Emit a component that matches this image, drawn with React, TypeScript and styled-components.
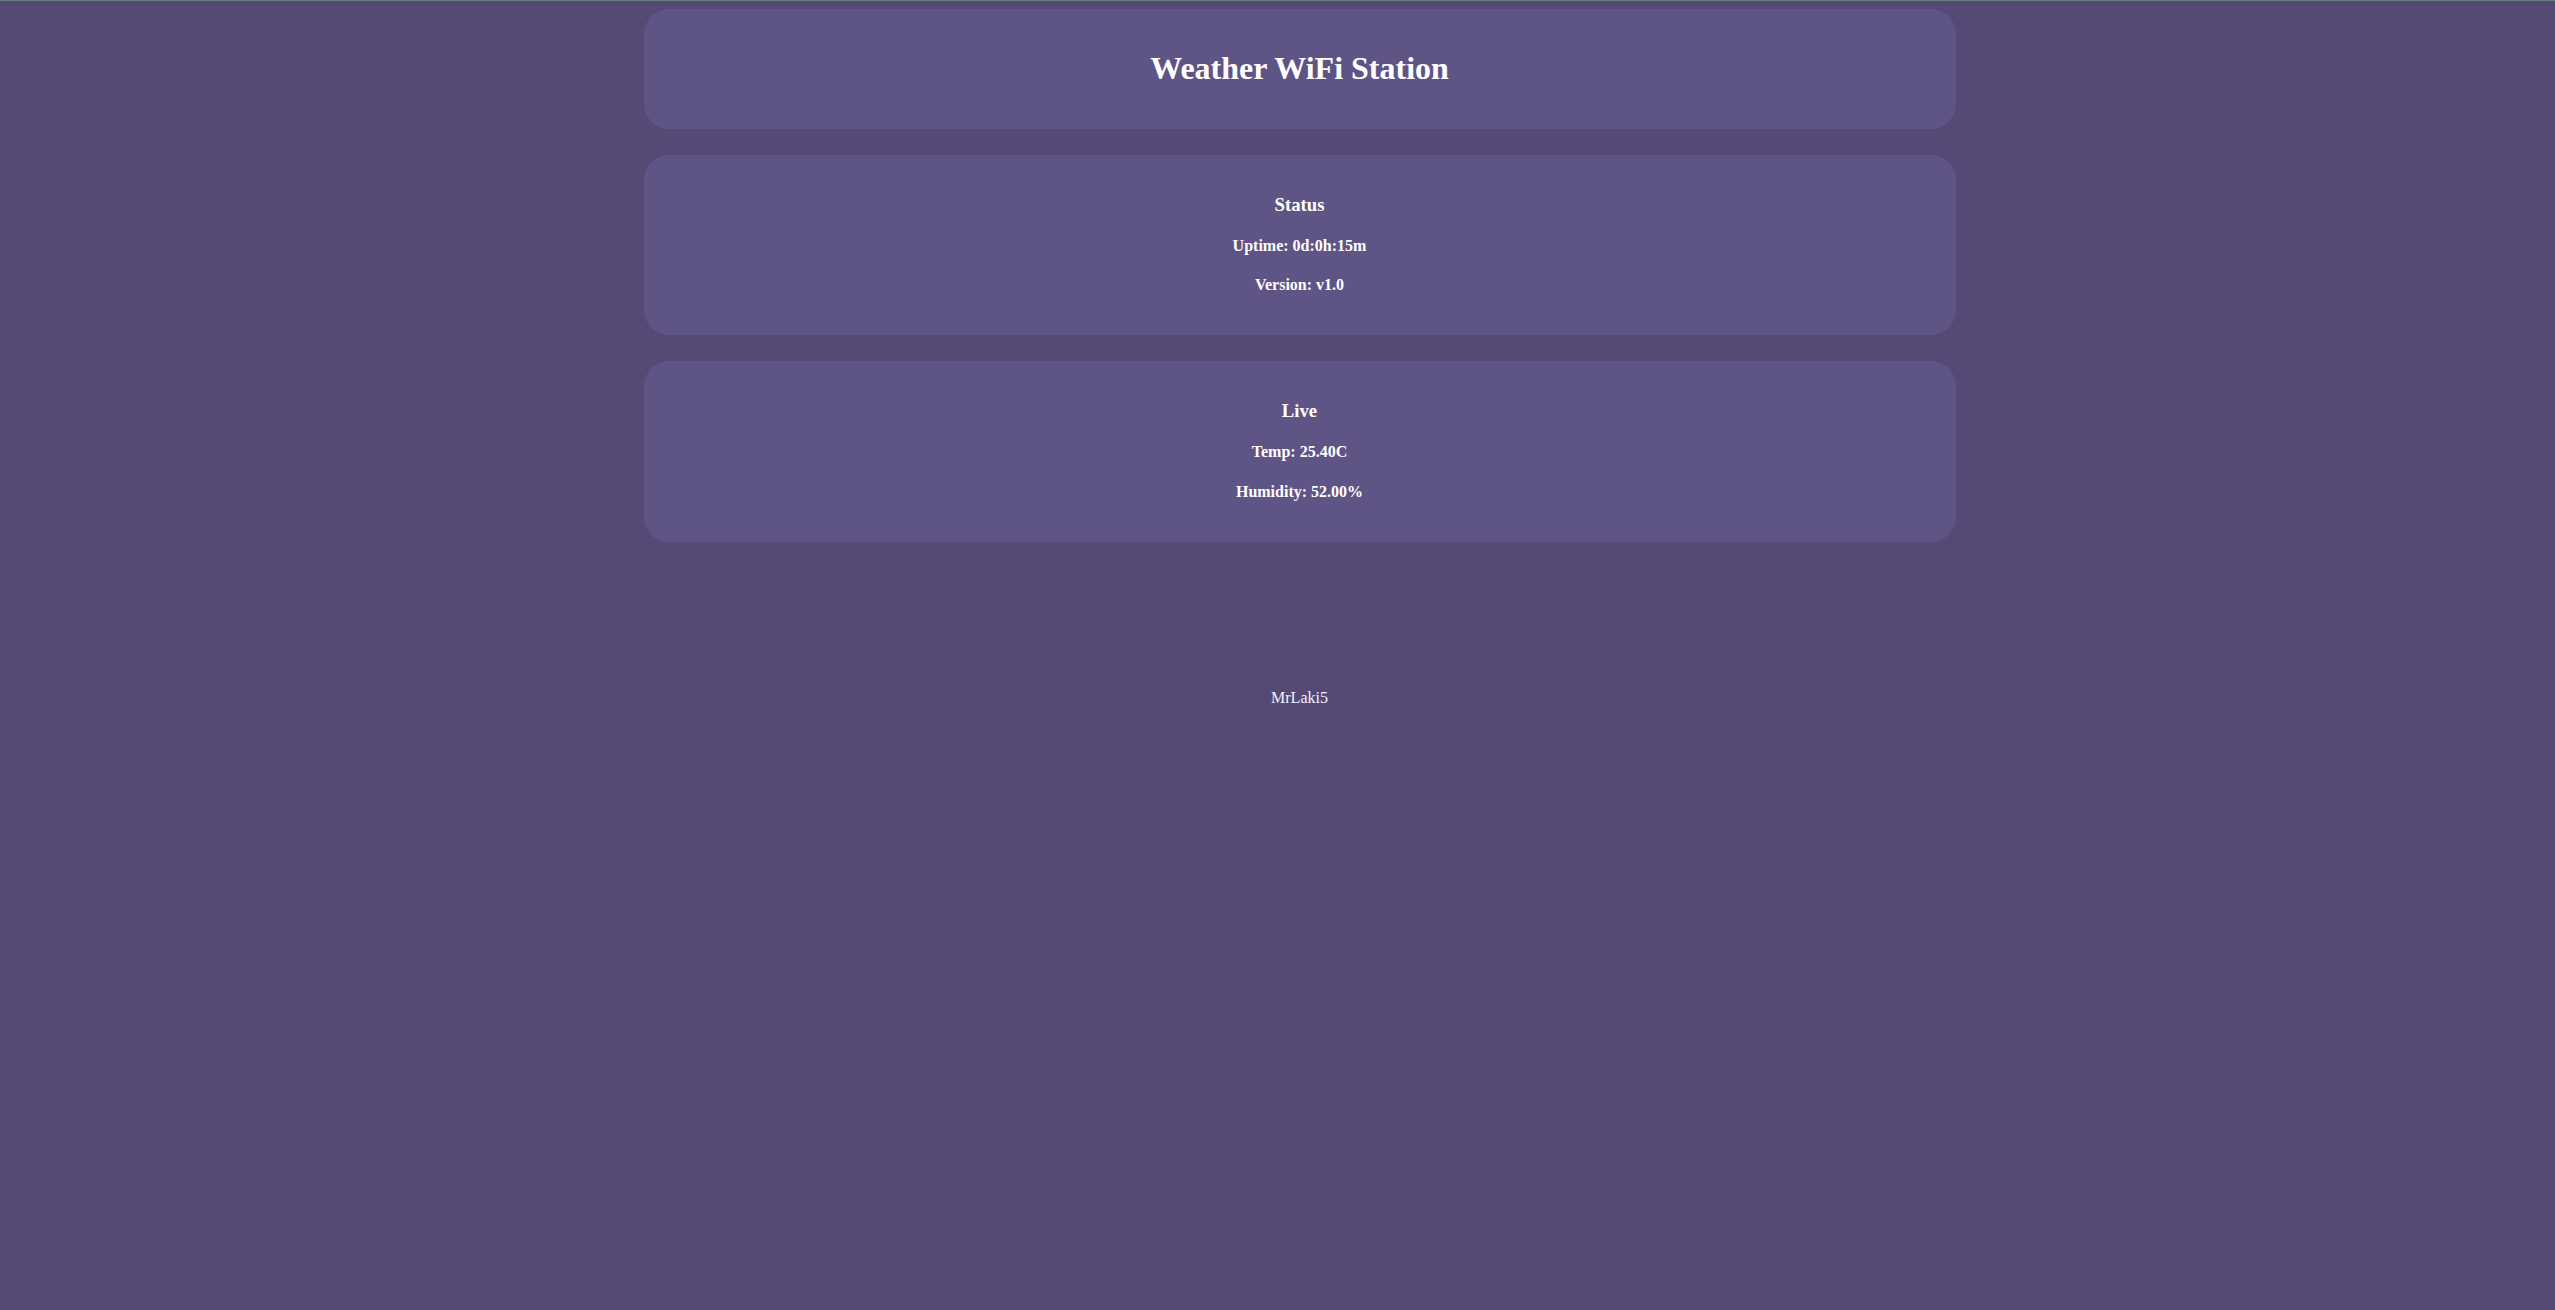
import React from "react";
import styled, { createGlobalStyle } from "styled-components";

const Global = createGlobalStyle`
  html, body {
    margin: 0;
    padding: 0;
    background: #544a75;
    font-family: "Liberation Serif", "Times New Roman", serif;
    color: #ffffff;
  }
  body {
    border-top: 1px solid #6b7d7d;
    min-height: 1309px;
  }
`;

const Page = styled.div`
  padding: 8px 0 0 44px;
`;

const Column = styled.main`
  width: 1312px;
  margin: 0 auto;
  display: flex;
  flex-direction: column;
  gap: 26px;
`;

const Card = styled.section`
  background: #5f5486;
  border-radius: 25px;
  padding: 20px;
  text-align: center;
`;

const Title = styled.h1`
  font-size: 32px;
  font-weight: bold;
  margin: 21.44px 0;
`;

const CardTitle = styled.h3`
  font-size: 18.72px;
  font-weight: bold;
  margin: 18.72px 0;
`;

const Line = styled.h4`
  font-size: 16px;
  font-weight: bold;
  margin: 21.28px 0;
`;

const Footer = styled.footer`
  margin-top: 147px;
  text-align: center;
  font-size: 16px;
  color: #f4f0ff;
`;

export default function App() {
  return (
    <Page>
      <Global />
      <Column>
        <Card>
          <Title>Weather WiFi Station</Title>
        </Card>
        <Card>
          <CardTitle>Status</CardTitle>
          <Line>Uptime: 0d:0h:15m</Line>
          <Line>Version: v1.0</Line>
        </Card>
        <Card>
          <CardTitle>Live</CardTitle>
          <Line>Temp: 25.40C</Line>
          <Line>Humidity: 52.00%</Line>
        </Card>
      </Column>
      <Footer>MrLaki5</Footer>
    </Page>
  );
}
